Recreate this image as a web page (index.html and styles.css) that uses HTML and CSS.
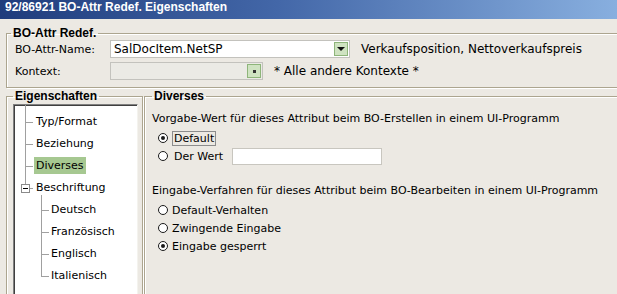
FILE: index.html
```html
<!DOCTYPE html>
<html>

    <head>
        <link rel="stylesheet" href="styles.css">
    </head>

    <body>
        <div class="titlebar">92/86921 BO-Attr Redef. Eigenschaften</div>

        <fieldset class="group group-top">
            <legend>BO-Attr Redef.</legend>
            <div class="row">
                <span class="label">BO-Attr-Name:</span>
                <div class="combo combo-name">
                    <span class="combo-text">SalDocItem.NetSP</span>
                    <span class="combo-btn"><span class="arrow"></span></span>
                </div>
                <span class="note">Verkaufsposition, Nettoverkaufspreis</span>
            </div>
            <div class="row">
                <span class="label">Kontext:</span>
                <div class="combo combo-ctx">
                    <span class="combo-text"></span>
                    <span class="combo-btn"><span class="dot"></span></span>
                </div>
                <span class="note">* Alle andere Kontexte *</span>
            </div>
        </fieldset>

        <div class="lower">
            <fieldset class="group group-tree">
                <legend>Eigenschaften</legend>
                <div class="tree">
                    <ul class="tree-root">
                        <li><span class="node">Typ/Format</span></li>
                        <li><span class="node">Beziehung</span></li>
                        <li><span class="node selected">Diverses</span></li>
                        <li class="last">
                            <span class="toggle"></span>
                            <span class="node">Beschriftung</span>
                            <ul class="tree-sub">
                                <li><span class="node">Deutsch</span></li>
                                <li><span class="node">Französisch</span></li>
                                <li><span class="node">Englisch</span></li>
                                <li class="last"><span class="node">Italienisch</span></li>
                            </ul>
                        </li>
                    </ul>
                </div>
            </fieldset>

            <fieldset class="group group-detail">
                <legend>Diverses</legend>
                <p class="question">Vorgabe-Wert für dieses Attribut beim BO-Erstellen in einem UI-Programm</p>
                <div class="radios">
                    <label class="radio checked"><span class="circle"></span><span class="focus">Default</span></label>
                    <label class="radio"><span class="circle"></span><span class="focus-off">Der Wert</span><span class="value-box"></span></label>
                </div>
                <p class="question q2">Eingabe-Verfahren für dieses Attribut beim BO-Bearbeiten in einem UI-Programm</p>
                <div class="radios">
                    <label class="radio"><span class="circle"></span>Default-Verhalten</label>
                    <label class="radio"><span class="circle"></span>Zwingende Eingabe</label>
                    <label class="radio checked"><span class="circle"></span>Eingabe gesperrt</label>
                </div>
            </fieldset>
        </div>
    </body>

</html>
```

FILE: styles.css
```css
body {
    margin: 0;
    background: #ece9e3;
    font-family: "DejaVu Sans", sans-serif;
    font-size: 11px;
    color: #000;
    overflow: hidden;
    height: 294px;
}
.titlebar {
    height: 19px;
    line-height: 19px;
    padding-left: 5px;
    color: #fff;
    font: bold 12px "Liberation Sans", sans-serif;
    background: linear-gradient(90deg, #1f3c7c 0%, #4367a8 45%, #88afdf 100%);
}
.group {
    border: 1px solid #aca58f;
    box-shadow: 1px 1px 0 #fff, inset 1px 1px 0 #fff;
    margin: 0;
    min-width: 0;
}
.group legend {
    font: bold 12px "Liberation Sans", sans-serif;
    line-height: 14px;
    padding: 0 2px;
}
.group-top {
    margin: 7px -30px 0 6px;
    padding: 0 0 7px 8px;
}
.group-top legend {
    margin-left: -4px;
}
.row {
    display: flex;
    align-items: center;
    height: 18px;
    margin-bottom: 4px;
}
.row:last-child {
    margin-bottom: 0;
}
.label {
    width: 95px;
}
.combo {
    display: flex;
    align-items: center;
    height: 18px;
    box-sizing: border-box;
    border: 1px solid #c3c2bd;
    background: #fff;
}
.combo-name {
    width: 240px;
}
.combo-ctx {
    width: 153px;
    background: #ebeae5;
}
.combo-text {
    flex: 1;
    padding-left: 3px;
    font-size: 12px;
}
.combo-btn {
    width: 12px;
    height: 12px;
    margin-right: 1px;
    border: 1px solid #8eb57a;
    background: #cfe3c1;
    display: flex;
    align-items: center;
    justify-content: center;
}
.arrow {
    width: 0;
    height: 0;
    border-left: 4px solid transparent;
    border-right: 4px solid transparent;
    border-top: 4px solid #111;
}
.dot {
    width: 3px;
    height: 3px;
    background: #333;
}
.note {
    margin-left: 11px;
    font-size: 12px;
}
.lower {
    display: flex;
    margin-top: 1px;
    gap: 1px;
    height: 205px;
}
.lower .group {
    border-bottom: none;
    box-sizing: border-box;
    height: 100%;
    display: flex;
    flex-direction: column;
}
.group-tree {
    width: 137px;
    margin-left: 6px;
    padding: 1px 4px 0 6px;
}
.tree {
    flex: 1;
    background: #fff;
    border-top: 1px solid #808080;
    border-left: 1px solid #808080;
    border-right: 1px solid #f4f3ee;
    box-shadow: inset 1px 1px 0 #404040;
    padding-top: 6px;
}
.tree ul {
    list-style: none;
    margin: 0;
    padding: 0;
}
.tree li {
    position: relative;
    line-height: 22px;
}
.tree-root > li {
    margin-left: 11px;
    padding-left: 9px;
}
.tree-sub > li {
    margin-left: 7px;
    padding-left: 8px;
}
.tree li::before {
    content: "";
    position: absolute;
    left: 0;
    top: -6px;
    bottom: 0;
    border-left: 1px solid #a0a0a0;
}
.tree-sub > li::before {
    top: 0;
}
.tree-sub > li:first-child::before {
    top: -4px;
}
.tree li.last::before {
    bottom: auto;
    height: 17px;
}
.tree-sub > li.last::before {
    height: 11px;
}
.tree li::after {
    content: "";
    position: absolute;
    left: 0;
    top: 11px;
    width: 8px;
    border-top: 1px solid #a0a0a0;
}
.node {
    padding: 2px 2px;
}
.selected {
    background: #a6c891;
}
.toggle {
    position: absolute;
    left: -4px;
    top: 7px;
    width: 7px;
    height: 7px;
    border: 1px solid #8a8a8a;
    background: #fff;
    z-index: 1;
}
.toggle::after {
    content: "";
    position: absolute;
    left: 1px;
    top: 3px;
    width: 5px;
    border-top: 1px solid #000;
}
.group-detail {
    flex: 1;
    margin-right: -30px;
    padding: 0 0 0 7px;
}
.question {
    margin: 9px 0 0 0;
    line-height: 14px;
}
.q2 {
    margin-top: 19px;
}
.radios {
    display: flex;
    flex-direction: column;
    padding-left: 6px;
    margin-top: 3px;
}
.radio {
    display: flex;
    align-items: center;
    height: 18px;
    gap: 4px;
}
.circle {
    width: 8px;
    height: 8px;
    border: 1px solid #1a1a1a;
    border-radius: 50%;
    background: #fff;
    position: relative;
}
.checked .circle::after {
    content: "";
    position: absolute;
    left: 2px;
    top: 2px;
    width: 4px;
    height: 4px;
    border-radius: 50%;
    background: #1a1a1a;
}
.focus {
    border: 1px solid #8c8c8c;
    padding: 0 1px;
    line-height: 13px;
}
.focus-off {
    padding: 0 2px;
}
.value-box {
    width: 150px;
    height: 17px;
    box-sizing: border-box;
    margin-left: 3px;
    background: #fff;
    border: 1px solid #c8c6bf;
}
```
